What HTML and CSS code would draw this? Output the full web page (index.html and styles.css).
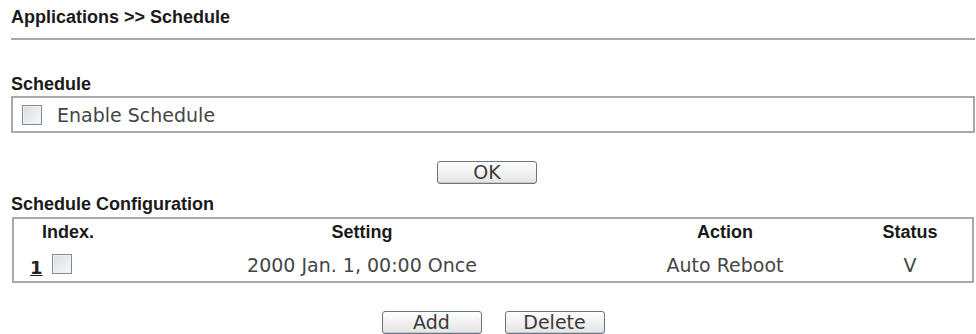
FILE: index.html
```html
<!DOCTYPE html>
<html lang="en">
<head>
    <meta charset="UTF-8">
    <title>Applications &gt;&gt; Schedule</title>
    <link rel="stylesheet" href="styles.css">
</head>
<body>

    <div class="page">
        <div class="page-title">Applications &gt;&gt; Schedule</div>
        <div class="rule"></div>

        <div class="section-title first">Schedule</div>
        <div class="panel">
            <span class="check"></span>
            <span class="label">Enable Schedule</span>
        </div>

        <div class="buttons ok-row">
            <button class="btn">OK</button>
        </div>

        <div class="section-title config">Schedule Configuration</div>
        <div class="sched-table">
            <div class="th">Index.</div>
            <div class="th">Setting</div>
            <div class="th">Action</div>
            <div class="th">Status</div>

            <div class="td idx"><a class="idx-link">1</a><span class="check"></span></div>
            <div class="td">2000 Jan. 1, 00:00 Once</div>
            <div class="td">Auto Reboot</div>
            <div class="td">V</div>
        </div>

        <div class="buttons bottom-row">
            <button class="btn">Add</button>
            <button class="btn">Delete</button>
        </div>
    </div>

</body>
</html>
```

FILE: styles.css
```css
body {
    margin: 0;
    padding: 0;
    font-family: "DejaVu Sans", Verdana, sans-serif;
    font-size: 19px;
    color: #454545;
    background-color: #fff;
}

.page {
    margin: 0 1px 0 11px;
    padding-top: 7px;
}

.page-title,
.section-title,
.th {
    font-family: "Liberation Sans", Arial, sans-serif;
    font-weight: bold;
    font-size: 18px;
    line-height: 21px;
    color: #1a1a1a;
}

.rule {
    height: 2px;
    background-color: #a8a8a8;
    margin-top: 10px;
}

.section-title.first {
    margin-top: 34px;
}

.section-title.config {
    margin-top: 10px;
}

.panel {
    margin-top: 1px;
    border: 2px solid #a9a9a9;
    height: 33px;
    display: flex;
    align-items: center;
    padding-left: 9px;
}

.check {
    display: inline-block;
    width: 18px;
    height: 18px;
    border: 1px solid #818b95;
    background: linear-gradient(135deg, #d9dee3, #f7f8f9); /* light bluish fill */
    box-shadow: inset 0 0 0 1px #eef0f2;
}

.label {
    margin-left: 15px;
    line-height: 22px;
}

.buttons {
    display: flex;
    justify-content: center;
    gap: 23px;
}

.ok-row {
    margin-top: 28px;
    padding-right: 12px;
}

.bottom-row {
    margin-top: 28px;
}

.btn {
    width: 100px;
    height: 23px;
    box-sizing: border-box;
    padding: 0;
    font-family: "DejaVu Sans", Verdana, sans-serif;
    font-size: 19px;
    line-height: 19px;
    color: #3a3a3a;
    border: 1px solid #66768a;
    border-radius: 3px;
    background: linear-gradient(#fefefe, #e4e4e4);
    box-shadow: inset 0 -1px 0 #c8c8c8;
}

.sched-table {
    margin: 2px 1px 0 1px;
    border: 2px solid #a9a9a9;
    display: grid;
    grid-template-columns: 108px 480px 246px 1fr;
}

.th {
    text-align: center;
    line-height: 20px;
    padding-top: 3px;
}

.td {
    text-align: center;
    line-height: 22px;
    padding: 12px 0 2px 0;
}

.td.idx {
    text-align: left;
    padding-left: 16px;
}

.idx-link {
    font-weight: bold;
    font-size: 18px;
    color: #222;
    text-decoration: underline;
    margin-right: 9px;
}
```
